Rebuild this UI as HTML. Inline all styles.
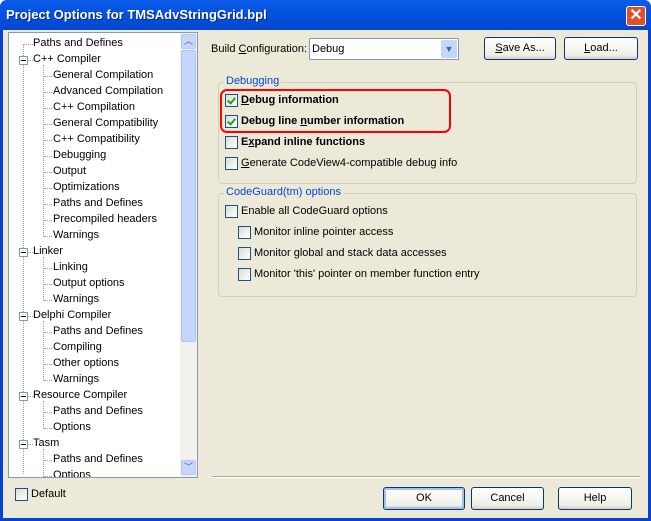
<!DOCTYPE html><html><head><style>
*{box-sizing:border-box}
body{margin:0;width:651px;height:521px;overflow:hidden;font:11px "Liberation Sans",sans-serif;color:#000}
.win{position:absolute;left:0;top:0;width:651px;height:521px;background:#0842d0;border-radius:7px 7px 0 0}
.title{position:absolute;left:0;top:0;width:651px;height:30px;background:linear-gradient(#0a5ce8,#0553e0 40%,#0447d0);border-radius:7px 7px 0 0;color:#fff;font-weight:bold;font-size:13px;padding:7px 0 0 6px;text-shadow:1px 1px #0a2a8a}
.close{position:absolute;left:626px;top:6px;width:20px;height:20px;background:#e0502a;border:1px solid #fff;border-radius:3px;color:#fff;font-size:16px;text-align:center;line-height:18px;font-weight:bold}
.body{position:absolute;left:3px;top:30px;width:645px;height:488px;background:#ECE9D8}
.a{position:absolute;white-space:nowrap}
.tree{position:absolute;left:8px;top:32px;width:190px;height:446px;background:#fff;border:1px solid #7f9db9;overflow:hidden}
.sb{position:absolute;left:180px;top:33px;width:17px;height:444px;background:#f3f1ec}
.sbb{position:absolute;width:15px;height:15px;background:#c5d5fc;border:1px solid #b8c8f0;border-radius:2px;color:#4d6185;font-size:9px;text-align:center;line-height:13px}
.btn{position:absolute;height:23px;border:1px solid #003c74;border-radius:3px;background:linear-gradient(#fff,#f0efe8 80%,#d6d0c5);text-align:center;line-height:21px}
.cb{position:absolute;width:13px;height:13px;border:1px solid #1c5180;background:linear-gradient(135deg,#dcdcd4,#fff)}
.cb.k::after{content:"";position:absolute;left:3px;top:1px;width:3px;height:6px;border:solid #21a121;border-width:0 2px 2px 0;transform:rotate(40deg)}
.grp{position:absolute;border:1px solid #d0d0bf;border-radius:4px}
.gl{position:absolute;color:#0046d5;background:#ECE9D8;padding:0 2px}
.h1{position:absolute;left:15px;width:9px;border-top:1px dotted #a0a0a0}
.h2{position:absolute;left:35px;width:8px;border-top:1px dotted #a0a0a0}
.v2{position:absolute;left:34px;border-left:1px dotted #a0a0a0}
.mb{position:absolute;left:10px;width:9px;height:9px;border:1px solid #7f9db9;background:#fff}
.mb::after{content:"";position:absolute;left:1px;top:3px;width:5px;border-top:1px solid #000}
</style></head><body>
<div class="win"></div>
<div class="title">Project Options for TMSAdvStringGrid.bpl</div>
<div class="close">✕</div>
<div class="body"></div>
<div class="tree">
<div style="position:absolute;left:14px;top:11px;height:430px;border-left:1px dotted #a0a0a0"></div>
<div class="h1" style="top:11px"></div>
<div class="v2" style="top:32px;height:172px"></div>
<div class="v2" style="top:224px;height:44px"></div>
<div class="v2" style="top:288px;height:60px"></div>
<div class="v2" style="top:368px;height:28px"></div>
<div class="v2" style="top:416px;height:30px"></div>
<div class="h2" style="top:43px"></div><div class="h2" style="top:59px"></div><div class="h2" style="top:75px"></div><div class="h2" style="top:91px"></div><div class="h2" style="top:107px"></div><div class="h2" style="top:123px"></div><div class="h2" style="top:139px"></div><div class="h2" style="top:155px"></div><div class="h2" style="top:171px"></div><div class="h2" style="top:187px"></div><div class="h2" style="top:203px"></div>
<div class="h2" style="top:235px"></div><div class="h2" style="top:251px"></div><div class="h2" style="top:267px"></div>
<div class="h2" style="top:299px"></div><div class="h2" style="top:315px"></div><div class="h2" style="top:331px"></div><div class="h2" style="top:347px"></div>
<div class="h2" style="top:379px"></div><div class="h2" style="top:395px"></div>
<div class="h2" style="top:427px"></div><div class="h2" style="top:443px"></div>
<div class="h1" style="top:27px"></div><div class="mb" style="top:23px"></div>
<div class="h1" style="top:219px"></div><div class="mb" style="top:215px"></div>
<div class="h1" style="top:283px"></div><div class="mb" style="top:279px"></div>
<div class="h1" style="top:363px"></div><div class="mb" style="top:359px"></div>
<div class="h1" style="top:411px"></div><div class="mb" style="top:407px"></div>
<div class="a" style="left:24px;top:4px">Paths and Defines</div>
<div class="a" style="left:24px;top:20px">C++ Compiler</div>
<div class="a" style="left:44px;top:36px">General Compilation</div>
<div class="a" style="left:44px;top:52px">Advanced Compilation</div>
<div class="a" style="left:44px;top:68px">C++ Compilation</div>
<div class="a" style="left:44px;top:84px">General Compatibility</div>
<div class="a" style="left:44px;top:100px">C++ Compatibility</div>
<div class="a" style="left:44px;top:116px">Debugging</div>
<div class="a" style="left:44px;top:132px">Output</div>
<div class="a" style="left:44px;top:148px">Optimizations</div>
<div class="a" style="left:44px;top:164px">Paths and Defines</div>
<div class="a" style="left:44px;top:180px">Precompiled headers</div>
<div class="a" style="left:44px;top:196px">Warnings</div>
<div class="a" style="left:24px;top:212px">Linker</div>
<div class="a" style="left:44px;top:228px">Linking</div>
<div class="a" style="left:44px;top:244px">Output options</div>
<div class="a" style="left:44px;top:260px">Warnings</div>
<div class="a" style="left:24px;top:276px">Delphi Compiler</div>
<div class="a" style="left:44px;top:292px">Paths and Defines</div>
<div class="a" style="left:44px;top:308px">Compiling</div>
<div class="a" style="left:44px;top:324px">Other options</div>
<div class="a" style="left:44px;top:340px">Warnings</div>
<div class="a" style="left:24px;top:356px">Resource Compiler</div>
<div class="a" style="left:44px;top:372px">Paths and Defines</div>
<div class="a" style="left:44px;top:388px">Options</div>
<div class="a" style="left:24px;top:404px">Tasm</div>
<div class="a" style="left:44px;top:420px">Paths and Defines</div>
<div class="a" style="left:44px;top:436px">Options</div>
</div>
<div class="sb"><div class="sbb" style="left:1px;top:1px">︿</div><div style="position:absolute;left:1px;top:17px;width:15px;height:292px;background:#c5d5fc;border:1px solid #b0c4f0;border-radius:2px"></div><div class="sbb" style="left:1px;top:427px">﹀</div></div>
<div class="a" style="left:211px;top:43px">Build <u>C</u>onfiguration:</div>
<div style="position:absolute;left:309px;top:38px;width:150px;height:22px;background:#fff;border:1px solid #7f9db9"><span class="a" style="left:2px;top:4px">Debug</span><div style="position:absolute;right:1px;top:1px;width:16px;height:18px;background:#c5d5fc;border-radius:2px;color:#4d6185;text-align:center;font-size:9px;line-height:18px">▼</div></div>
<div class="btn" style="left:484px;top:37px;width:72px"><u>S</u>ave As...</div>
<div class="btn" style="left:564px;top:37px;width:74px"><u>L</u>oad...</div>
<div class="grp" style="left:218px;top:82px;width:419px;height:102px"></div>
<div class="gl" style="left:224px;top:75px">Debugging</div>
<div style="position:absolute;left:220px;top:89px;width:231px;height:44px;border:2px solid #f00;border-radius:7px"></div>
<div class="cb k" style="left:225px;top:94px"></div><div class="a" style="left:241px;top:94px;font-weight:bold"><u>D</u>ebug information</div>
<div class="cb k" style="left:225px;top:115px"></div><div class="a" style="left:241px;top:115px;font-weight:bold">Debug line <u>n</u>umber information</div>
<div class="cb" style="left:225px;top:136px"></div><div class="a" style="left:241px;top:136px;font-weight:bold">E<u>x</u>pand inline functions</div>
<div class="cb" style="left:225px;top:157px"></div><div class="a" style="left:241px;top:157px"><u>G</u>enerate CodeView4-compatible debug info</div>
<div class="grp" style="left:218px;top:193px;width:419px;height:104px"></div>
<div class="gl" style="left:224px;top:186px">CodeGuard(tm) options</div>
<div class="cb" style="left:225px;top:205px"></div><div class="a" style="left:241px;top:205px">Enable all CodeGuard options</div>
<div class="cb" style="left:238px;top:226px"></div><div class="a" style="left:254px;top:226px">Monitor inline pointer access</div>
<div class="cb" style="left:238px;top:247px"></div><div class="a" style="left:254px;top:247px">Monitor global and stack data accesses</div>
<div class="cb" style="left:238px;top:268px"></div><div class="a" style="left:254px;top:268px">Monitor 'this' pointer on member function entry</div>
<div style="position:absolute;left:212px;top:476px;width:428px;border-top:1px solid #aca899;border-bottom:1px solid #fff"></div>
<div class="cb" style="left:15px;top:488px"></div><div class="a" style="left:31px;top:488px">Default</div>
<div class="btn" style="left:383px;top:487px;width:82px;border-color:#003c74;box-shadow:inset 0 0 0 2px #a8c0f0">OK</div>
<div class="btn" style="left:471px;top:487px;width:73px">Cancel</div>
<div class="btn" style="left:558px;top:487px;width:74px">Help</div>
</body></html>
